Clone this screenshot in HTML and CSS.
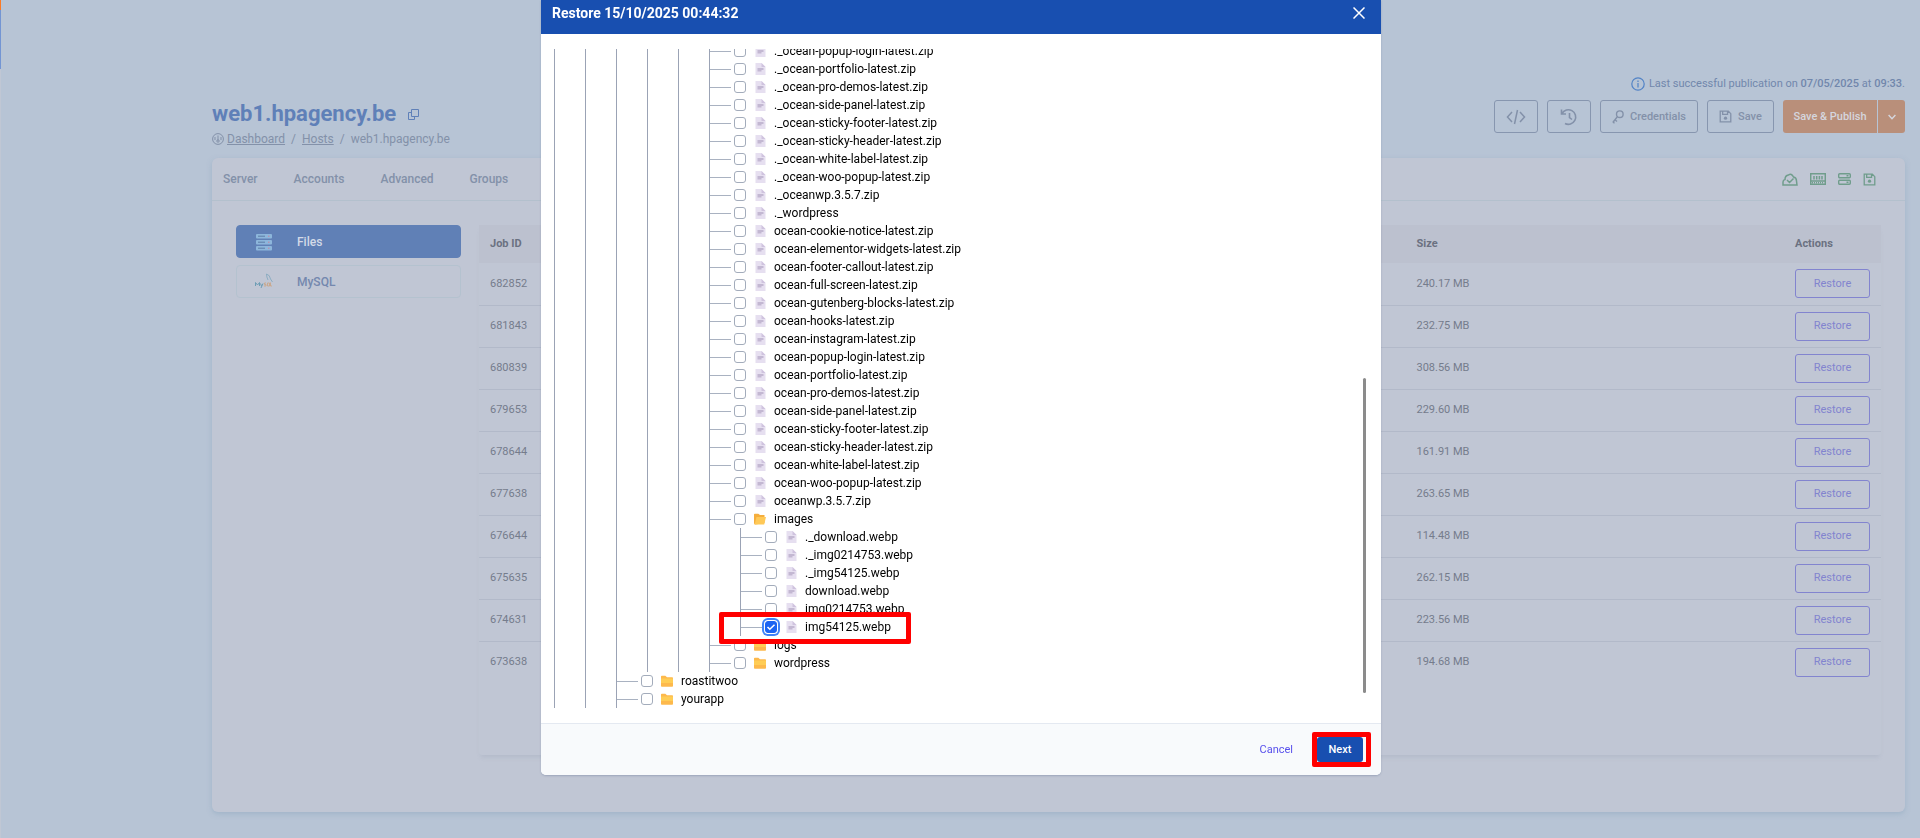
FILE: index.html
```
<!DOCTYPE html>
<html lang="en">
<head>
    <meta charset="UTF-8" />
    <meta name="viewport" content="width=device-width, initial-scale=1.0" />
    <title>web1.hpagency.be</title>
    <link rel="stylesheet" href="styles.css">
</head>

<body>
    <svg class="sprite" aria-hidden="true">
        <symbol id="file" viewBox="0 0 12 12">
            <path d="M1.500 0h6l4 4v8h-10z" fill="#e6dff0" />
            <path d="M7.500 0l4 4h-4z" fill="#cfc3de" />
            <path d="M3.500 5h6v2h-6zM3.500 7h4v1.500h-4z" fill="#c3b8d2" />
        </symbol>
        <symbol id="folder" viewBox="0 0 12 12">
            <path d="M0 1.500q0-.8.8-.8h3.500L6 2.200h5.200q.8 0 .8.8v8q0 .8-.8.8H.8Q0 11.800 0 11z" fill="#fdb94c" />
            <path d="M0 3.500h12V8H0z" fill="#ffcd55" />
        </symbol>
        <symbol id="folder-open" viewBox="0 0 12 12">
            <path d="M0 1.500q0-.8.8-.8h3.500L6 2h4.500v8L1.500 11.500Q0 11.500 0 10z" fill="#f5ae3d" />
            <path d="M2.500 4H12l-1.800 7.500H.6z" fill="#ffc957" />
        </symbol>
        <symbol id="disk" viewBox="0 0 16 16">
            <path d="M1.500 1.500h10l3 3v10h-13zM4.500 1.500v4h6v-4" fill="none" stroke="currentColor" stroke-width="1.600" />
            <circle cx="8" cy="10" r="2" fill="currentColor" />
        </symbol>
    </svg>

    <aside class="side-strip"></aside>

    <main class="page">
        <header class="page-header">
            <div class="heading">
                <h1>web1.hpagency.be
                    <svg width="11" height="11" viewBox="0 0 11 11" fill="none" stroke="currentColor"><path d="M3.500.5h7v7h-7zM3.500 3.500h-3v7h6v-3" /></svg>
                </h1>
                <nav class="breadcrumb">
                    <svg width="12" height="12" viewBox="0 0 12 12" fill="none" stroke="currentColor"><circle cx="6" cy="6" r="5.400" /><path d="M6 2.500v5M3 4v3M9 4v3" /><circle cx="6" cy="8" r="1.200" /></svg>
                    <a href="#">Dashboard</a>
                    <span>/</span>
                    <a href="#">Hosts</a>
                    <span>/</span>
                    <span>web1.hpagency.be</span>
                </nav>
            </div>
            <div class="header-side">
                <p class="publication">
                    <svg width="14" height="14" viewBox="0 0 14 14" fill="none" stroke="currentColor" stroke-width="1.200"><circle cx="7" cy="7" r="6.200" /><path d="M7 6v4.500M7 3.500v1.500" /></svg>
                    <span>Last successful publication on <b>07/05/2025</b> at <b>09:33</b>.</span>
                </p>
                <div class="actions">
                    <button class="btn btn-icon" aria-label="Code">
                        <svg width="20" height="16" viewBox="0 0 20 16" fill="none" stroke="currentColor" stroke-width="1.500"><path d="M6 3L1.500 8 6 13M14 3l4.500 5L14 13M11.500 1l-3 14" /></svg>
                    </button>
                    <button class="btn btn-icon" aria-label="History">
                        <svg width="18" height="18" viewBox="0 0 18 18" fill="none" stroke="currentColor" stroke-width="1.600"><path d="M1.500 1.500v4.500H6M2 5.500A7.300 7.300 0 1 1 5 15.500M9.500 5v4.500l2.500 2" /></svg>
                    </button>
                    <button class="btn btn-wide">
                        <svg width="12" height="14" viewBox="0 0 12 14" fill="none" stroke="currentColor" stroke-width="1.400"><circle cx="7.800" cy="4.200" r="3.300" /><path d="M5.500 6.500L.8 12.500M3 9.800l2 1.700M1 12l1.500 1.300" /></svg>
                        Credentials
                    </button>
                    <button class="btn btn-save">
                        <svg width="13" height="13"><use href="#disk" /></svg>
                        Save
                    </button>
                    <div class="split">
                        <button class="btn-publish">Save &amp; Publish</button>
                        <button class="btn-more" aria-label="More">
                            <svg width="8" height="6" viewBox="0 0 8 6" fill="none" stroke="currentColor" stroke-width="1.400"><path d="M.6 1L4 4.800 7.400 1" /></svg>
                        </button>
                    </div>
                </div>
            </div>
        </header>

        <section class="card">
            <div class="tabs">
                <nav>
                    <a href="#">Server</a>
                    <a href="#">Accounts</a>
                    <a href="#">Advanced</a>
                    <a href="#">Groups</a>
                </nav>
                <div class="status">
                    <svg width="16" height="13" viewBox="0 0 16 13" fill="none" stroke="currentColor" stroke-width="1.500"><path d="M1 12V9q0-2 2-2.500Q3 2.500 6.500 2q3-2 5 2 3 .5 3 4l.5 4zM5 7l2.500 2.500L11.500 5.500" /></svg>
                    <svg width="16" height="12" viewBox="0 0 16 12" fill="none" stroke="currentColor" stroke-width="1.500"><path d="M.7.7h14.600v10.500H.7zM.7 8h14.600M4 3v3.500M6.700 3v3.500M9.400 3v3.500M12 3v3.500" /><path d="M2 9.700h12" stroke-dasharray="1 1" /></svg>
                    <svg width="13" height="12" viewBox="0 0 13 12" fill="none" stroke="currentColor" stroke-width="1.400"><rect x=".7" y=".7" width="11.600" height="4" rx="1" /><rect x=".7" y="7.300" width="11.600" height="4" rx="1" /><path d="M8.500 2.700h2M8.500 9.300h2" /></svg>
                    <svg width="13" height="13"><use href="#disk" /></svg>
                </div>
            </div>
            <div class="card-body">
                <div class="types">
                    <button class="type active">
                        <svg width="18" height="18" viewBox="0 0 18 18"><g fill="#8db6db"><rect x="1" y="1" width="16" height="4.500" rx="1" /><rect x="1" y="7" width="16" height="4.500" rx="1" /><rect x="1" y="13" width="16" height="4.500" rx="1" /></g><path d="M3 3.200h7M3 9.200h7M3 15.200h7" stroke="#5c7da5" /><path d="M13 3.200h1.500M13 9.200h1.500M13 15.200h1.500" stroke="#c9849d" /></svg>
                        Files
                    </button>
                    <button class="type">
                        <svg width="18" height="18" viewBox="0 0 18 18" fill="none"><path d="M.5 13V9.500l2 2.500 2-2.500V13M5.500 10.500l1 2.500M8 10.500L6 15" stroke="#6d9db5" /><path d="M11 10H9.500v1.500H11V13H9M12.500 10h2v3h-2zM15.500 9.500V13H17" stroke="#c9a98f" /><path d="M11.500 1q3.500 1 4 5l2 3M11.500 1q0 3 1.500 6" stroke="#7fa6bd" stroke-width=".8" /></svg>
                        MySQL
                    </button>
                </div>
                <div class="jobs">
                    <table>
                        <thead>
                            <tr><th>Job ID</th><th class="col-size">Size</th><th class="col-actions">Actions</th></tr>
                        </thead>
                        <tbody>
                            <tr><td>682852</td><td>240.17 MB</td><td><button>Restore</button></td></tr>
                            <tr><td>681843</td><td>232.75 MB</td><td><button>Restore</button></td></tr>
                            <tr><td>680839</td><td>308.56 MB</td><td><button>Restore</button></td></tr>
                            <tr><td>679653</td><td>229.60 MB</td><td><button>Restore</button></td></tr>
                            <tr><td>678644</td><td>161.91 MB</td><td><button>Restore</button></td></tr>
                            <tr><td>677638</td><td>263.65 MB</td><td><button>Restore</button></td></tr>
                            <tr><td>676644</td><td>114.48 MB</td><td><button>Restore</button></td></tr>
                            <tr><td>675635</td><td>262.15 MB</td><td><button>Restore</button></td></tr>
                            <tr><td>674631</td><td>223.56 MB</td><td><button>Restore</button></td></tr>
                            <tr><td>673638</td><td>194.68 MB</td><td><button>Restore</button></td></tr>
                        </tbody>
                    </table>
                </div>
            </div>
        </section>
    </main>

    <div class="overlay">
        <div class="modal" role="dialog" aria-labelledby="modal-title">
            <div class="modal-header">
                <h2 id="modal-title">Restore 15/10/2025 00:44:32</h2>
                <button class="close-button" aria-label="Close">
                    <svg width="12" height="12" viewBox="0 0 12 12" fill="none" stroke="currentColor" stroke-width="1.500"><path d="M.5.5l11 11M11.500.5l-11 11" /></svg>
                </button>
            </div>

            <div class="modal-body">
                <div class="tree-view">
                    <ul class="tree"><li><ul><li><ul>
                        <li><ul><li><ul><li><ul id="backup-files">
                            <li><label><input type="checkbox"><svg><use href="#file" /></svg>._ocean-popup-login-latest.zip</label></li>
                            <li><label><input type="checkbox"><svg><use href="#file" /></svg>._ocean-portfolio-latest.zip</label></li>
                            <li><label><input type="checkbox"><svg><use href="#file" /></svg>._ocean-pro-demos-latest.zip</label></li>
                            <li><label><input type="checkbox"><svg><use href="#file" /></svg>._ocean-side-panel-latest.zip</label></li>
                            <li><label><input type="checkbox"><svg><use href="#file" /></svg>._ocean-sticky-footer-latest.zip</label></li>
                            <li><label><input type="checkbox"><svg><use href="#file" /></svg>._ocean-sticky-header-latest.zip</label></li>
                            <li><label><input type="checkbox"><svg><use href="#file" /></svg>._ocean-white-label-latest.zip</label></li>
                            <li><label><input type="checkbox"><svg><use href="#file" /></svg>._ocean-woo-popup-latest.zip</label></li>
                            <li><label><input type="checkbox"><svg><use href="#file" /></svg>._oceanwp.3.5.7.zip</label></li>
                            <li><label><input type="checkbox"><svg><use href="#file" /></svg>._wordpress</label></li>
                            <li><label><input type="checkbox"><svg><use href="#file" /></svg>ocean-cookie-notice-latest.zip</label></li>
                            <li><label><input type="checkbox"><svg><use href="#file" /></svg>ocean-elementor-widgets-latest.zip</label></li>
                            <li><label><input type="checkbox"><svg><use href="#file" /></svg>ocean-footer-callout-latest.zip</label></li>
                            <li><label><input type="checkbox"><svg><use href="#file" /></svg>ocean-full-screen-latest.zip</label></li>
                            <li><label><input type="checkbox"><svg><use href="#file" /></svg>ocean-gutenberg-blocks-latest.zip</label></li>
                            <li><label><input type="checkbox"><svg><use href="#file" /></svg>ocean-hooks-latest.zip</label></li>
                            <li><label><input type="checkbox"><svg><use href="#file" /></svg>ocean-instagram-latest.zip</label></li>
                            <li><label><input type="checkbox"><svg><use href="#file" /></svg>ocean-popup-login-latest.zip</label></li>
                            <li><label><input type="checkbox"><svg><use href="#file" /></svg>ocean-portfolio-latest.zip</label></li>
                            <li><label><input type="checkbox"><svg><use href="#file" /></svg>ocean-pro-demos-latest.zip</label></li>
                            <li><label><input type="checkbox"><svg><use href="#file" /></svg>ocean-side-panel-latest.zip</label></li>
                            <li><label><input type="checkbox"><svg><use href="#file" /></svg>ocean-sticky-footer-latest.zip</label></li>
                            <li><label><input type="checkbox"><svg><use href="#file" /></svg>ocean-sticky-header-latest.zip</label></li>
                            <li><label><input type="checkbox"><svg><use href="#file" /></svg>ocean-white-label-latest.zip</label></li>
                            <li><label><input type="checkbox"><svg><use href="#file" /></svg>ocean-woo-popup-latest.zip</label></li>
                            <li><label><input type="checkbox"><svg><use href="#file" /></svg>oceanwp.3.5.7.zip</label></li>
                            <li>
                                <label><input type="checkbox"><svg><use href="#folder-open" /></svg>images</label>
                                <ul>
                                    <li><label><input type="checkbox"><svg><use href="#file" /></svg>._download.webp</label></li>
                                    <li><label><input type="checkbox"><svg><use href="#file" /></svg>._img0214753.webp</label></li>
                                    <li><label><input type="checkbox"><svg><use href="#file" /></svg>._img54125.webp</label></li>
                                    <li><label><input type="checkbox"><svg><use href="#file" /></svg>download.webp</label></li>
                                    <li><label><input type="checkbox"><svg><use href="#file" /></svg>img0214753.webp</label></li>
                                    <li class="marked"><label><input type="checkbox" checked><svg><use href="#file" /></svg>img54125.webp</label></li>
                                </ul>
                            </li>
                            <li><label><input type="checkbox"><svg><use href="#folder" /></svg>logs</label></li>
                            <li><label><input type="checkbox"><svg><use href="#folder" /></svg>wordpress</label></li>
                        </ul></li></ul></li></ul></li>
                        <li><label><input type="checkbox"><svg><use href="#folder" /></svg>roastitwoo</label></li>
                        <li><label><input type="checkbox"><svg><use href="#folder" /></svg>yourapp</label></li>
                    </ul></li></ul></li></ul>
                </div>
                <div class="scroll-thumb"></div>
            </div>

            <div class="modal-footer">
                <button class="btn-cancel">Cancel</button>
                <div class="marked-next"><button class="btn-next">Next</button></div>
            </div>
        </div>
    </div>
</body>
</html>
```

FILE: styles.css
```
*,
*::before,
*::after {
    box-sizing: border-box;
}

body {
    margin: 0;
    min-height: 100vh;
    display: flex;
    font-family: Roboto, sans-serif;
    font-size: 12px;
    line-height: 18px;
    color: #8391a9;
    background-color: #b7c4d5;
    overflow: hidden;
}

h1, h2, p, ul {
    margin: 0;
    padding: 0;
}

ul {
    list-style: none;
}

a {
    color: inherit;
}

button {
    font: inherit;
    color: inherit;
    background: none;
    border: none;
    padding: 0;
    display: flex;
    align-items: center;
    justify-content: center;
    cursor: pointer;
}

svg {
    flex-shrink: 0;
}

.sprite {
    position: absolute;
    width: 0;
    height: 0;
}

.side-strip {
    width: 1px;
    background: linear-gradient(#fb7a25 10px, #7395d3 10px, #7395d3 69px, #c0c7d4 69px);
}

/* --- page --- */
.page {
    flex: 1;
    padding: 75px 15px 0 211px;
}

.page-header {
    display: flex;
    justify-content: space-between;
    height: 83px;
}

.heading {
    padding-top: 23px;
}

.heading h1 {
    display: flex;
    align-items: center;
    gap: 12px;
    font-size: 22px;
    line-height: 32px;
    color: #5f80b8;
}

.breadcrumb {
    display: flex;
    align-items: center;
    gap: 6px;
}

.breadcrumb svg {
    margin-right: -3px;
}

.publication {
    display: flex;
    align-items: center;
    justify-content: flex-end;
    gap: 4px;
    font-size: 11px;
    color: #7187ac;
}

.publication b {
    font-weight: 500;
}

.publication svg {
    color: #5283c6;
}

.actions {
    display: flex;
    justify-content: flex-end;
    gap: 9px;
    padding-top: 7px;
    font-size: 11px;
    font-weight: 500;
}

.btn {
    height: 33px;
    border: 1px solid #8796af;
    border-radius: 3px;
    gap: 6px;
}

.btn-icon {
    width: 44px;
}

.btn-wide {
    width: 98px;
}

.btn-save {
    width: 67px;
}

.split {
    display: flex;
    gap: 1px;
    height: 33px;
    color: #d5d6de;
    border-radius: 3px;
    overflow: hidden;
}

.btn-publish,
.btn-more {
    background-color: #b98f7a;
}

.btn-publish {
    width: 94px;
}

.btn-more {
    width: 27px;
}

.card {
    height: 654px;
    background-color: #c0c6d4;
    border-radius: 6px;
    box-shadow: 0 2px 5px rgba(140, 165, 190, 0.5);
}

.tabs {
    display: flex;
    justify-content: space-between;
    align-items: center;
    height: 43px;
    padding: 0 29px 0 11px;
    border-bottom: 1px solid #b3c0cd;
}

.tabs nav {
    display: flex;
    gap: 36px;
    font-weight: 500;
}

.tabs nav a {
    text-decoration: none;
}

.status {
    display: flex;
    align-items: center;
    gap: 12px;
    color: #709d8c;
}

.card-body {
    display: flex;
    gap: 18px;
    padding: 24px 24px 0;
}

.types {
    display: flex;
    flex-direction: column;
    gap: 7px;
    width: 225px;
}

.type {
    justify-content: flex-start;
    gap: 24px;
    height: 33px;
    padding-left: 18px;
    border: 1px solid #b4c2cf;
    border-radius: 4px;
    color: #7488ae;
    font-weight: 500;
}

.type.active {
    background-color: #6080b6;
    border-color: #6080b6;
    color: #d3dae7;
}

.jobs {
    flex: 1;
    height: 530px;
    border-radius: 3px;
    box-shadow: 0 4px 4px -2px rgba(150, 160, 180, 0.3);
}

table {
    width: 100%;
    border-collapse: collapse;
    table-layout: fixed;
    font-size: 11px;
    color: #757c8c;
}

th {
    height: 38px;
    padding: 0 11px;
    text-align: left;
    color: #6b7181;
    background-color: #bcc1cf;
}

td {
    height: 42px;
    padding: 0 11px;
    border-bottom: 1px solid #b2b9c9;
}

tr:last-child td {
    border-bottom: none;
}

.col-size {
    width: 27%;
}

.col-actions {
    width: 97px;
}

td button {
    width: 75px;
    height: 29px;
    border: 1px solid #8284cf;
    border-radius: 3px;
    color: #8284cf;
}

/* --- restore modal --- */
.overlay {
    position: fixed;
    inset: 0;
    padding-left: 2px;
}

.modal {
    max-width: 840px;
    margin: 0 auto;
    color: #000;
    background-color: #fff;
    border-radius: 0 0 5px 5px;
    box-shadow: 0 1px 2px rgba(70, 90, 130, 0.3);
    overflow: hidden;
}

.modal-header {
    display: flex;
    align-items: center;
    justify-content: space-between;
    height: 34px;
    padding: 0 16px 8px 11px;
    color: #fff;
    background-color: #184fb0;
}

.modal-header h2 {
    font-size: 14px;
}

.modal-body {
    position: relative;
    padding: 15px 13px;
    border-bottom: 1px solid #e4e9f1;
}

.tree-view {
    display: flex;
    flex-direction: column;
    justify-content: flex-end;
    max-height: 659px;
    overflow: hidden;
}

.tree ul {
    margin-left: 30px;
}

.tree,
.tree ul {
    border-left: 1px solid #9ba3b5;
}

.tree label {
    display: flex;
    align-items: center;
    height: 18px;
    white-space: nowrap;
}

.tree label::before {
    content: "";
    width: 21px;
    height: 1px;
    margin-right: 3px;
    background-color: #a9b2c1;
}

.tree input {
    appearance: none;
    width: 12px;
    height: 12px;
    margin: 0 8px 0 0;
    border: 1px solid #a3acbb;
    border-radius: 3px;
}

.tree input:checked {
    border-color: #1c64f2;
    background: #1c64f2 url("data:image/svg+xml,%3Csvg xmlns='http://www.w3.org/2000/svg' viewBox='0 0 10 10'%3E%3Cpath d='M1.500 5l2.300 2.300L8.500 2.700' fill='none' stroke='white' stroke-width='1.500'/%3E%3C/svg%3E") center / 10px no-repeat;
    box-shadow: 0 0 0 1px #fff, 0 0 0 3px #3f83f8;
}

.tree label svg {
    width: 12px;
    height: 12px;
    margin-right: 8px;
}

.scroll-thumb {
    position: absolute;
    top: 344px;
    right: 15px;
    width: 3px;
    height: 315px;
    border-radius: 2px;
    background-color: #8b8b8b;
}

/* red frames */
.marked {
    position: relative;
}

.marked::after,
.marked-next::after {
    content: "";
    position: absolute;
    border: 5px solid #f00;
    border-radius: 2px;
}

.marked::after {
    top: -6px;
    left: -22px;
    width: 192px;
    height: 32px;
    z-index: 1;
}

.modal-footer {
    display: flex;
    align-items: center;
    justify-content: flex-end;
    gap: 24px;
    height: 51px;
    padding-right: 18px;
    background-color: #f8fafc;
    font-size: 11px;
}

.btn-cancel {
    color: #5850ec;
}

.marked-next {
    position: relative;
}

.marked-next::after {
    inset: -5px -8px -5px -5px;
    pointer-events: none;
}

.btn-next {
    width: 46px;
    height: 25px;
    color: #fff;
    font-weight: 500;
    background-color: #184fb0;
    border-radius: 3px;
}
```
